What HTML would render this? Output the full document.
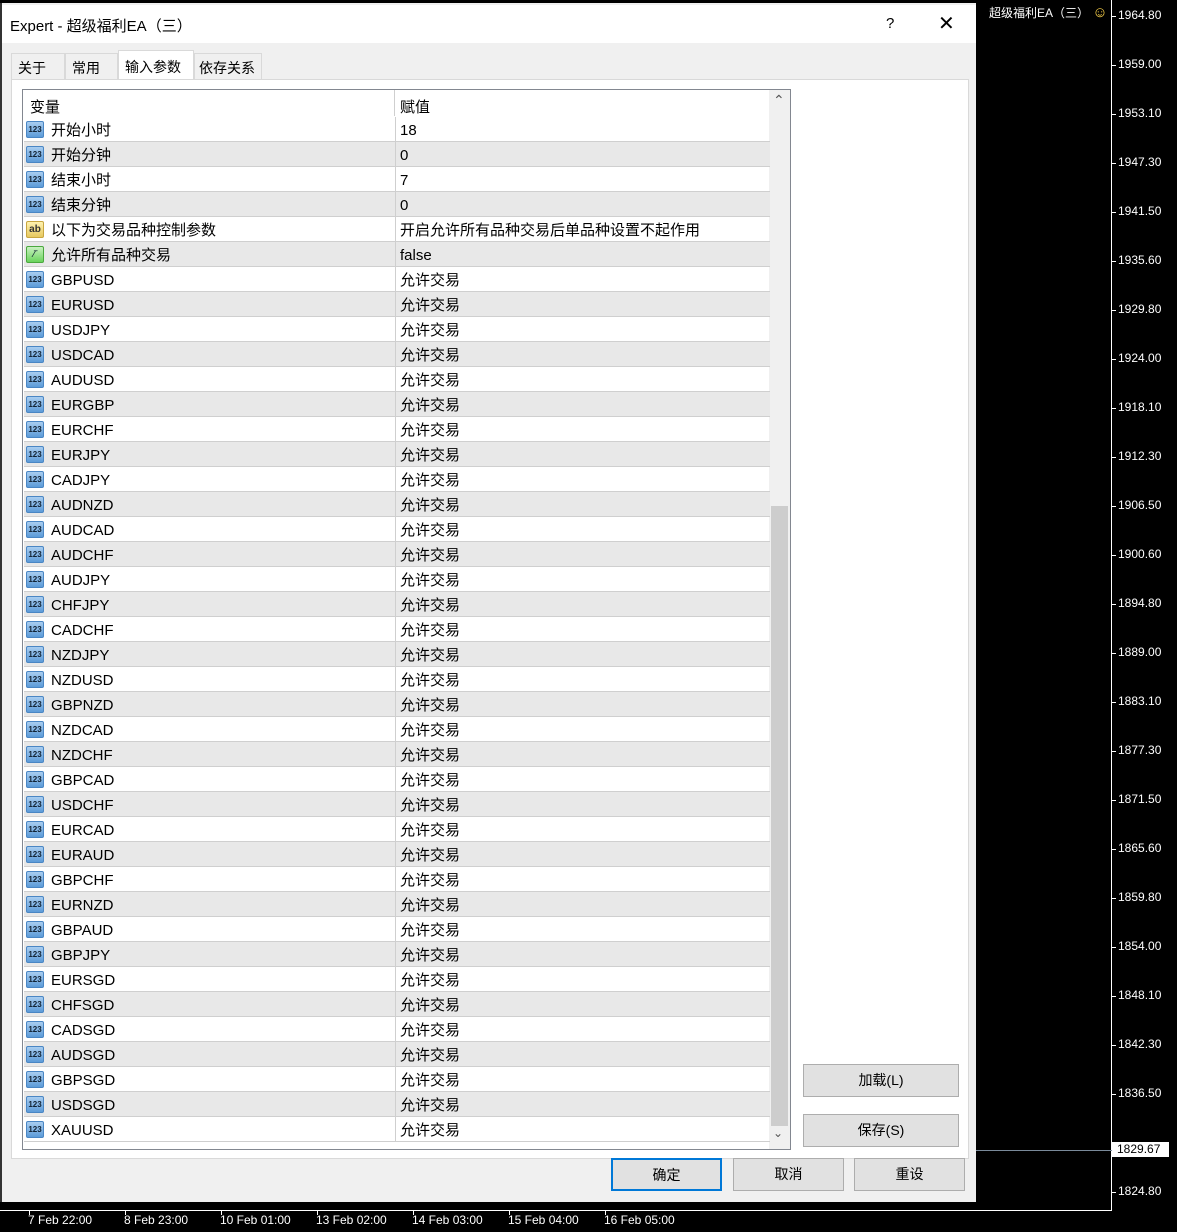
<!DOCTYPE html>
<html><head><meta charset="utf-8"><style>
*{margin:0;padding:0;box-sizing:border-box}
body{width:1177px;height:1232px;background:#000;position:relative;overflow:hidden;font-family:"Liberation Sans","Noto Sans CJK SC",sans-serif;color:#000}
.a{position:absolute}
#dlg{left:0;top:3px;width:976px;height:1199px;background:#f0f0f0;border-left:2px solid #333}
#title{left:2px;top:5px;width:974px;height:38px;background:#fff;font-size:15px}
.tab{top:53px;height:26px;background:#f0f0f0;border:1px solid #d9d9d9;border-bottom:none;font-size:14px;padding:4px 0 0 6px}
#panel{left:11px;top:79px;width:958px;height:1080px;background:#fff;border:1px solid #d9d9d9}
#list{left:22px;top:89px;width:769px;height:1061px;background:#fff;border:1px solid #828790}
.row{position:absolute;left:1px;width:746px;height:25px;border-bottom:1px solid #cfcfcf;font-size:15px;line-height:27px}
.row.g{background:#e8e8e8}
.row .n{position:absolute;left:27px;top:0}
.row .v{position:absolute;left:371px;top:0;border-left:1px solid #cfcfcf;padding-left:4px;height:25px}
.ic{position:absolute;left:2px;top:4px;width:18px;height:17px;border-radius:2px;background:linear-gradient(#a9cdf0,#5d9bd8);border:1px solid #4a86c4;font-size:8px;font-weight:bold;color:#123;text-align:center;line-height:15px;font-family:"Liberation Sans",sans-serif}
.ic.y{background:linear-gradient(#fff2b0,#e6c860);border-color:#c8a640;font-size:10px;color:#333}
.ic.gr{background:linear-gradient(#c9f1c1,#6ad35c);border-color:#4aa83e}
.btn{background:#e1e1e1;border:1px solid #adadad;font-size:14px;text-align:center;line-height:30px;height:33px}
.p{position:absolute;left:1118px;color:#fff;font-size:12px}
.t{position:absolute;top:1213px;color:#fff;font-size:12px}
</style></head><body>
<div class="a" style="left:0;top:0;width:976px;height:3px;background:#000"></div>
<div class="a" id="dlg"></div>
<div class="a" id="title"><span class="a" style="left:8px;top:10px">Expert - 超级福利EA（三）</span><span class="a" style="left:884px;top:10px">?</span><span class="a" style="left:936px;top:6px;font-size:20px">✕</span></div>
<div class="a tab" style="left:11px;width:54px">关于</div>
<div class="a tab" style="left:65px;width:53px">常用</div>
<div class="a tab" style="left:118px;top:50px;height:30px;width:76px;background:#fff;padding-top:6px">输入参数</div>
<div class="a tab" style="left:194px;width:68px;padding-left:4px">依存关系</div>
<div class="a" id="panel"></div>
<div class="a" id="list">
<div class="a" style="left:7px;top:6px;font-size:15px">变量</div>
<div class="a" style="left:371px;top:0;height:26px;border-left:1px solid #cfcfcf;padding:6px 0 0 5px;font-size:15px">赋值</div>
<div class="a" style="left:746px;top:0;width:21px;height:1059px;background:#f0f0f0"></div>
<div class="a" style="left:748px;top:416px;width:17px;height:620px;background:#cdcdcd"></div>
<div class="a" style="left:750px;top:2px;font-size:14px;color:#555">⌃</div>
<div class="a" style="left:750px;top:1036px;font-size:12px;color:#555">⌄</div>
<div id="rows"></div>
</div>
<div class="a btn" style="left:803px;top:1064px;width:156px">加载(L)</div>
<div class="a btn" style="left:803px;top:1114px;width:156px">保存(S)</div>
<div class="a btn" style="left:611px;top:1158px;width:111px;border:2px solid #0078d7">确定</div>
<div class="a btn" style="left:733px;top:1158px;width:111px">取消</div>
<div class="a btn" style="left:854px;top:1158px;width:111px">重设</div>
<div class="a" style="left:989px;top:4px;color:#fff;font-size:12px">超级福利EA（三） <span style="color:#ffd54a;font-size:15px">☺</span></div>
<div class="a" style="left:1111px;top:0;width:1px;height:1211px;background:#fff"></div>
<div class="a" style="left:0;top:1210px;width:1112px;height:1px;background:#fff"></div>
<div class="a" style="left:976px;top:1150px;width:136px;height:1px;background:#7a8a9a"></div>
<div class="a" style="left:1112px;top:1142px;width:57px;height:15px;background:#fff;color:#000;font-size:12px;padding-left:5px">1829.67</div>
<div id="ax"></div>
<script>
var names=["开始小时","开始分钟","结束小时","结束分钟","以下为交易品种控制参数","允许所有品种交易","GBPUSD","EURUSD","USDJPY","USDCAD","AUDUSD","EURGBP","EURCHF","EURJPY","CADJPY","AUDNZD","AUDCAD","AUDCHF","AUDJPY","CHFJPY","CADCHF","NZDJPY","NZDUSD","GBPNZD","NZDCAD","NZDCHF","GBPCAD","USDCHF","EURCAD","EURAUD","GBPCHF","EURNZD","GBPAUD","GBPJPY","EURSGD","CHFSGD","CADSGD","AUDSGD","GBPSGD","USDSGD","XAUUSD"];
var vals=["18","0","7","0","开启允许所有品种交易后单品种设置不起作用","false"];
var h="";
for(var i=0;i<names.length;i++){var v=i<6?vals[i]:"允许交易";var c=i==4?'ic y':(i==5?'ic gr':'ic');var t=i==4?'ab':(i==5?'⁄‾':'123');
h+='<div class="row'+(i%2?' g':'')+'" style="top:'+(27+25*i)+'px"><div class="'+c+'">'+t+'</div><span class="n">'+names[i]+'</span><span class="v">'+v+'</span></div>';}
document.getElementById('rows').innerHTML=h;
var p=["1964.80","1959.00","1953.10","1947.30","1941.50","1935.60","1929.80","1924.00","1918.10","1912.30","1906.50","1900.60","1894.80","1889.00","1883.10","1877.30","1871.50","1865.60","1859.80","1854.00","1848.10","1842.30","1836.50","1830.60","1824.80"];
var a="";for(var j=0;j<p.length;j++){if(j==23)continue;a+='<div class="p" style="top:'+(8+49*j)+'px">'+p[j]+'</div><div class="a" style="left:1112px;top:'+(16+49*j)+'px;width:4px;height:1px;background:#fff"></div>';}
var d=["7 Feb 22:00","8 Feb 23:00","10 Feb 01:00","13 Feb 02:00","14 Feb 03:00","15 Feb 04:00","16 Feb 05:00"];
for(var k=0;k<d.length;k++){a+='<div class="t" style="left:'+(28+96*k)+'px">'+d[k]+'</div><div class="a" style="left:'+(29+96*k)+'px;top:1211px;width:1px;height:4px;background:#fff"></div>';}
document.getElementById('ax').innerHTML=a;
</script>
</body></html>
